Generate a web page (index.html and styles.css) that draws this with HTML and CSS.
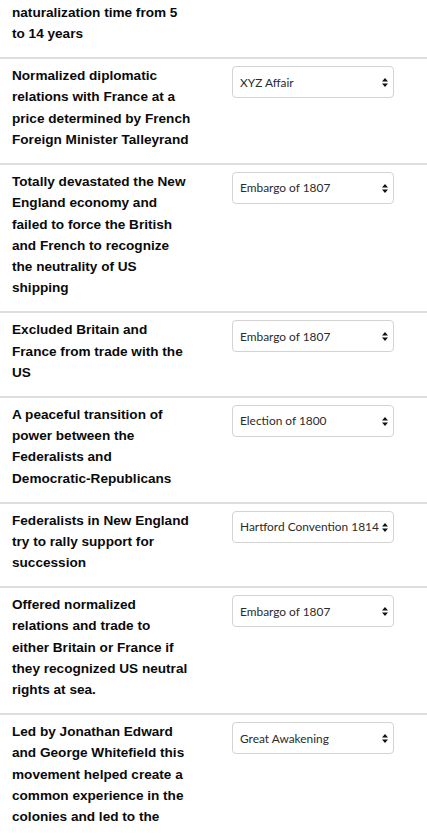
FILE: index.html
```html
<!DOCTYPE html>
<html lang="en">
<head>
<meta charset="utf-8">
<title>Matching</title>
<link rel="stylesheet" href="styles.css">
</head>
<body>
<div class="list">
  <div class="row row-partial">
    <div class="q">naturalization time from 5 to 14 years</div>
  </div>
  <div class="row">
    <div class="q">Normalized diplomatic relations with France at a price determined by French Foreign Minister Talleyrand</div>
    <div class="a"><span class="sel-wrap"><select class="sel"><option>XYZ Affair</option></select><svg class="arrows" width="6" height="9" viewBox="0 0 6 9"><path d="M3 0L6 3.5H0Z M3 9L0 5.5H6Z" fill="#111"/></svg></span></div>
  </div>
  <div class="row">
    <div class="q">Totally devastated the New England economy and failed to force the British and French to recognize the neutrality of US shipping</div>
    <div class="a"><span class="sel-wrap"><select class="sel"><option>Embargo of 1807</option></select><svg class="arrows" width="6" height="9" viewBox="0 0 6 9"><path d="M3 0L6 3.5H0Z M3 9L0 5.5H6Z" fill="#111"/></svg></span></div>
  </div>
  <div class="row">
    <div class="q">Excluded Britain and France from trade with the US</div>
    <div class="a"><span class="sel-wrap"><select class="sel"><option>Embargo of 1807</option></select><svg class="arrows" width="6" height="9" viewBox="0 0 6 9"><path d="M3 0L6 3.5H0Z M3 9L0 5.5H6Z" fill="#111"/></svg></span></div>
  </div>
  <div class="row">
    <div class="q">A peaceful transition of power between the Federalists and Democratic-Republicans</div>
    <div class="a"><span class="sel-wrap"><select class="sel"><option>Election of 1800</option></select><svg class="arrows" width="6" height="9" viewBox="0 0 6 9"><path d="M3 0L6 3.5H0Z M3 9L0 5.5H6Z" fill="#111"/></svg></span></div>
  </div>
  <div class="row">
    <div class="q">Federalists in New England try to rally support for succession</div>
    <div class="a"><span class="sel-wrap"><select class="sel"><option>Hartford Convention 1814</option></select><svg class="arrows" width="6" height="9" viewBox="0 0 6 9"><path d="M3 0L6 3.5H0Z M3 9L0 5.5H6Z" fill="#111"/></svg></span></div>
  </div>
  <div class="row">
    <div class="q">Offered normalized relations and trade to either Britain or France if they recognized US neutral rights at sea.</div>
    <div class="a"><span class="sel-wrap"><select class="sel"><option>Embargo of 1807</option></select><svg class="arrows" width="6" height="9" viewBox="0 0 6 9"><path d="M3 0L6 3.5H0Z M3 9L0 5.5H6Z" fill="#111"/></svg></span></div>
  </div>
  <div class="row">
    <div class="q">Led by Jonathan Edward and George Whitefield this movement helped create a common experience in the colonies and led to the</div>
    <div class="a"><span class="sel-wrap"><select class="sel"><option>Great Awakening</option></select><svg class="arrows" width="6" height="9" viewBox="0 0 6 9"><path d="M3 0L6 3.5H0Z M3 9L0 5.5H6Z" fill="#111"/></svg></span></div>
  </div>
</div>
</body>
</html>
```

FILE: styles.css
```css
html, body {
  margin: 0;
  padding: 0;
  background: #fff;
}

body {
  overflow: hidden;
}

.list {
  display: flex;
  flex-direction: column;
}

.row {
  display: grid;
  grid-template-columns: 179px 162px;
  column-gap: 41px;
  align-items: start;
  padding: 6px 0 12.6px 12px;
  border-top: 2px solid #dedede;
}

.row-partial {
  border-top: none;
  padding-top: 2px;
}

.q {
  font-family: "Liberation Sans", Arial, sans-serif;
  font-weight: bold;
  font-size: 13.6px;
  line-height: 21.3px;
  color: #0a0a0a;
}

.a {
  padding-top: 1px;
}

.sel-wrap {
  position: relative;
  display: block;
  width: 162px;
}

.sel {
  display: block;
  width: 162px;
  height: 32px;
  margin: 0;
  padding: 0 12px 0 7px;
  box-sizing: border-box;
  -webkit-appearance: none;
  appearance: none;
  background: #fff;
  border: 1px solid #d3d3d3;
  border-radius: 4px;
  font-family: Lato, "Liberation Sans", sans-serif;
  font-size: 11.9px;
  color: #2b2b2b;
  outline: none;
}

.arrows {
  position: absolute;
  right: 6px;
  top: 12px;
  pointer-events: none;
}
```
